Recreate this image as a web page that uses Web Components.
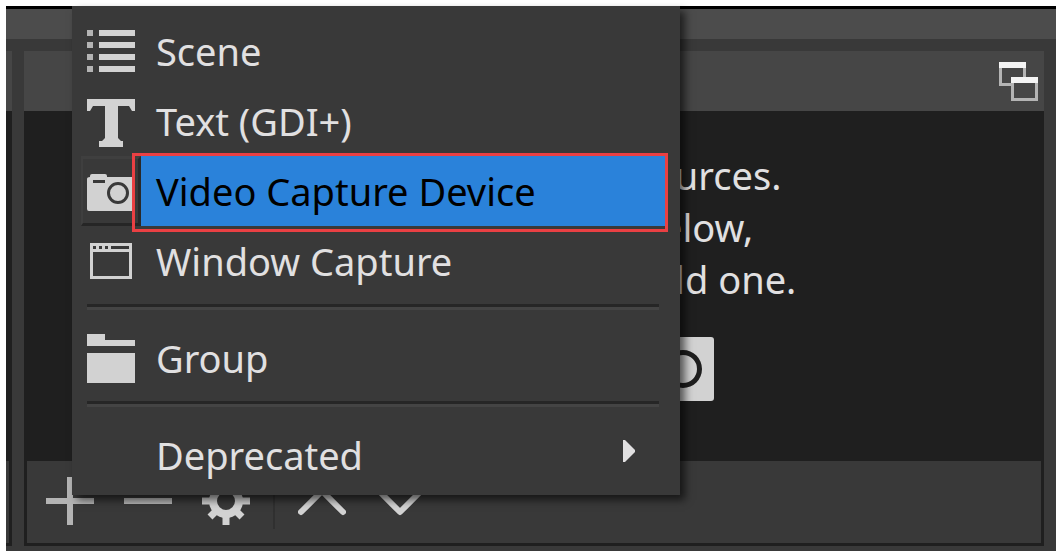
<!DOCTYPE html>
<html lang="en">
<head>
<meta charset="UTF-8">
<meta name="viewport" content="width=device-width, initial-scale=1.0">
<title>Sources</title>
<style>
    * {
        box-sizing: border-box;
    }

    body {
        margin: 0;
        padding: 6px 8px 9px 6px;
        min-height: 100vh;
        display: flex;
        background: #ffffff;
        color: #e1e0e1;
        font-family: "Noto Sans", "Open Sans", sans-serif;
        font-size: 38px;
        line-height: 52px;
    }
</style>
</head>
<body>
<app-window></app-window>

<script>
const ICONS = {
    scene: `<svg width="48" height="42" viewBox="0 0 16 14" shape-rendering="crispEdges">
        <path fill="#b4b4b4" d="M0 0h2v2H0zM0 4h2v2H0zM0 8h2v2H0zM0 12h2v2H0z"/>
        <path d="M4 0h12v2H4zM4 4h12v2H4zM4 8h12v2H4zM4 12h12v2H4z"/></svg>`,
    text: `<svg width="48" height="52" viewBox="0 -4 48 52">
        <path d="M0 0H48V12H45L42 7H31V39L34 42H36V48H12V42H15L18 39V7H6L3 12H0Z"/></svg>`,
    camera: `<svg width="48" height="39" viewBox="0 -2 48 39">
        <path fill-rule="evenodd" d="M3 3V2Q3 0 5 0H18Q20 0 20 2V3H46Q48 3 48 5V35Q48 37 46 37H2Q0 37 0 35V5Q0 3 3 3ZM6 6V9H18V6ZM31 8A11 11 0 1 0 31 30A11 11 0 1 0 31 8ZM31 11A8 8 0 1 1 31 27A8 8 0 1 1 31 11Z"/></svg>`,
    window: `<svg width="42" height="36" viewBox="0 0 14 12" shape-rendering="crispEdges">
        <path fill-rule="evenodd" d="M0 0H14V12H0ZM1 1V2H2V1ZM3 1V2H4V1ZM5 1V2H6V1ZM7 1V2H13V1ZM1 3V11H13V3Z"/></svg>`,
    group: `<svg width="48" height="49" viewBox="0 0 48 49" shape-rendering="crispEdges">
        <path d="M0 0H18V6H48V12H0ZM0 19H48V49H0Z"/></svg>`,
    arrow: `<svg width="12" height="30" viewBox="0 0 12 30">
        <path d="M0 0H2L12 10V12L2 22H0Z"/></svg>`,
    plus: `<svg width="48" height="48" viewBox="0 0 48 48" shape-rendering="crispEdges">
        <path d="M21 0H27V21H48V27H27V48H21V27H0V21H21Z"/></svg>`,
    minus: `<svg width="48" height="48" viewBox="0 0 48 48" shape-rendering="crispEdges">
        <path d="M0 21H48V27H0Z"/></svg>`,
    gear: `<svg width="48" height="48" viewBox="0 0 48 48">
        <path fill="none" stroke="currentColor" stroke-width="8" d="M24 11A13 13 0 1 1 24 37A13 13 0 1 1 24 11Z"/>
        <path fill="none" stroke="currentColor" stroke-width="7" d="M24 0V10M24 38V48M0 24H10M38 24H48M8 8L14 14M34 34L40 40M8 40L14 34M34 14L40 8"/></svg>`,
    up: `<svg width="48" height="48" viewBox="0 0 48 48">
        <path fill="none" stroke="currentColor" stroke-width="6" stroke-linecap="round" d="M3 35L24 14L45 35"/></svg>`,
    down: `<svg width="48" height="48" viewBox="0 0 48 48">
        <path fill="none" stroke="currentColor" stroke-width="6" stroke-linecap="round" stroke-linejoin="round" d="M3 14L24 35L45 14"/></svg>`,
    popout: `<svg width="39" height="39" viewBox="0 0 13 13" shape-rendering="crispEdges">
        <path fill="#b4b4b4" d="M0 0H9V5H13V13H4V8H0ZM1 2V7H4V5H8V2ZM5 7V12H12V7Z" fill-rule="evenodd"/>
        <path fill="#f4f4f4" d="M0 0H9V2H0ZM4 5H13V7H4Z"/></svg>`,
    image: `<svg width="74" height="64" viewBox="0 0 74 64">
        <path fill-rule="evenodd" d="M0 0H74V64H0ZM6 6V58H68V6ZM12 52L28 26L40 42L50 32L62 52Z"/></svg>`,
    monitor: `<svg width="74" height="64" viewBox="0 0 74 64">
        <path fill-rule="evenodd" d="M0 0H74V50H44V58H54V64H20V58H30V50H0ZM6 6V44H68V6Z"/></svg>`,
    globe: `<svg width="74" height="64" viewBox="0 0 74 64">
        <path fill="none" stroke="currentColor" stroke-width="4" d="M37 2A30 30 0 1 1 37 62A30 30 0 1 1 37 2ZM37 2Q10 32 37 62Q64 32 37 2ZM7 32H67"/></svg>`,
    bigcamera: `<svg width="84" height="70" viewBox="0 0 84 70">
        <path fill-rule="evenodd" d="M5 6V3Q5 0 8 0H32Q35 0 35 3V6H81Q84 6 84 9V67Q84 70 81 70H3Q0 70 0 67V9Q0 6 5 6ZM10 12V17H32V12ZM53 19A19 19 0 1 0 53 57A19 19 0 1 0 53 19ZM53 24A14 14 0 1 1 53 52A14 14 0 1 1 53 24Z"/></svg>`
};

class ObsIcon extends HTMLElement {
    constructor(){
        super();
        this.attachShadow({mode: 'open'})
    }

    connectedCallback(){
        this.shadowRoot.innerHTML = `
        <style>
            :host {
                display: block;
            }

            svg {
                display: block;
                fill: currentColor;
            }
        </style>
        ${ICONS[this.getAttribute('name')]}
    `;
        this.shadowRoot.querySelector('svg').setAttribute('aria-hidden', 'true');
    }
}

class MenuEntry extends HTMLElement {
    constructor(){
        super();
        this.attachShadow({mode: 'open'})
    }

    connectedCallback(){
        const icon = this.getAttribute('icon');
        this.shadowRoot.innerHTML = `
        <style>
            * {
                box-sizing: border-box;
            }

            :host {
                display: block;
                position: relative;
            }

            button {
                display: flex;
                width: 100%;
                height: 70px;
                padding: 0 15px 0 9px;
                border: 0;
                background: none;
                color: inherit;
                font: inherit;
                text-align: left;
            }

            .icon {
                width: 60px;
                display: flex;
                align-items: center;
                justify-content: center;
                color: #d2d2d2;
            }

            .label {
                flex: 1;
                display: flex;
                align-items: center;
                justify-content: space-between;
                padding: 0 30px 0 15px;
            }

            :host([selected]) .icon {
                border: solid #3f3f3f;
                border-width: 3px 3px 3px 2px;
                border-right-color: #292929;
                border-bottom-color: #262626;
            }

            :host([selected]) .label {
                background: #2a82da;
                color: #000000;
            }

            /* red marker around the highlighted entry */
            :host([selected])::after {
                content: '';
                position: absolute;
                top: -3px;
                right: 12px;
                bottom: -6px;
                left: 60px;
                border: 3px solid #ea4043;
                pointer-events: none;
            }
        </style>
        <button type="button" role="menuitem">
            <span class="icon">${icon ? `<obs-icon name="${icon}"></obs-icon>` : ''}</span>
            <span class="label">
                <slot></slot>
                ${this.hasAttribute('submenu') ? '<obs-icon name="arrow"></obs-icon>' : ''}
            </span>
        </button>
    `;
    }
}

class SourceMenu extends HTMLElement {
    constructor(){
        super();
        this.attachShadow({mode: 'open'})
    }

    connectedCallback(){
        this.shadowRoot.innerHTML = `
        <style>
            :host {
                display: block;
                box-sizing: border-box;
                padding: 10px 0 5px;
                background: #393939;
                box-shadow: 5px 5px 8px rgba(0, 0, 0, 0.6);
            }

            hr {
                height: 3px;
                margin: 8px 21px 13px 15px;
                border: 0;
                border-bottom: 3px solid #444444;
                background: #262626;
            }
        </style>
        <div role="menu">
            <menu-entry icon="scene">Scene</menu-entry>
            <menu-entry icon="text">Text (GDI+)</menu-entry>
            <menu-entry icon="camera" selected>Video Capture Device</menu-entry>
            <menu-entry icon="window">Window Capture</menu-entry>
            <hr>
            <menu-entry icon="group">Group</menu-entry>
            <hr>
            <menu-entry submenu>Deprecated</menu-entry>
        </div>
    `;
    }
}

class DockToolbar extends HTMLElement {
    constructor(){
        super();
        this.attachShadow({mode: 'open'})
    }

    connectedCallback(){
        this.shadowRoot.innerHTML = `
        <style>
            :host {
                display: flex;
                height: 82px;
                padding-left: 4px;
                background: #393939;
                color: #d2d2d2;
            }

            button {
                display: flex;
                align-items: center;
                justify-content: center;
                width: 78px;
                height: 80px;
                padding: 0;
                border: 0;
                background: none;
                color: inherit;
            }

            .dim {
                color: #b4b4b4;
            }

            .divider {
                width: 2px;
                height: 54px;
                margin: 14px 8px;
                background: #303030;
            }
        </style>
        <button type="button" class="dim" aria-label="Add"><obs-icon name="plus"></obs-icon></button>
        <button type="button" class="dim" aria-label="Remove"><obs-icon name="minus"></obs-icon></button>
        <button type="button" aria-label="Properties"><obs-icon name="gear"></obs-icon></button>
        <span class="divider"></span>
        <button type="button" aria-label="Move up"><obs-icon name="up"></obs-icon></button>
        <button type="button" aria-label="Move down"><obs-icon name="down"></obs-icon></button>
    `;
    }
}

class SourcesDock extends HTMLElement {
    constructor(){
        super();
        this.attachShadow({mode: 'open'})
    }

    connectedCallback(){
        this.shadowRoot.innerHTML = `
        <style>
            :host {
                display: flex;
                flex-direction: column;
            }

            header {
                display: flex;
                align-items: center;
                justify-content: flex-end;
                height: 60px;
                padding-right: 6px;
                background: #464646;
            }

            header button {
                padding: 0;
                border: 0;
                background: none;
            }

            .body {
                flex: 1;
                display: flex;
                flex-direction: column;
                border: solid #1f1f1f;
                border-width: 0 3px 3px;
                background: #1f1f1f;
            }

            .empty {
                flex: 1;
                display: flex;
                flex-direction: column;
                align-items: center;
                justify-content: center;
                gap: 26px;
                padding-bottom: 22px;
                text-align: center;
            }

            p {
                margin: 0;
            }

            .types {
                display: flex;
                align-items: flex-end;
                gap: 18px;
                color: #d2d2d2;
            }
        </style>
        <header>
            <button type="button" aria-label="Undock"><obs-icon name="popout"></obs-icon></button>
        </header>
        <div class="body">
            <div class="empty">
                <p>You don't have any sources.<br>Click the + button below,<br>or right click here to add one.</p>
                <div class="types">
                    <obs-icon name="image"></obs-icon>
                    <obs-icon name="monitor"></obs-icon>
                    <obs-icon name="globe"></obs-icon>
                    <obs-icon name="bigcamera"></obs-icon>
                </div>
            </div>
            <dock-toolbar></dock-toolbar>
        </div>
    `;
    }
}

class AppWindow extends HTMLElement {
    constructor(){
        super();
        this.attachShadow({mode: 'open'})
    }

    connectedCallback(){
        this.shadowRoot.innerHTML = `
        <style>
            * {
                box-sizing: border-box;
            }

            :host {
                flex: 1;
                display: flex;
                flex-direction: column;
                position: relative;
                background: #393939;
            }

            .strip {
                height: 33px;
                border-top: 3px solid #000000;
                background: #4c4c4c;
            }

            .docks {
                flex: 1;
                display: flex;
                gap: 12px;
                padding: 12px 12px 5px 0;
            }

            /* right edge of the neighbouring dock */
            .neighbour {
                width: 6px;
                display: flex;
                flex-direction: column;
            }

            .neighbour .title {
                height: 60px;
                background: #464646;
            }

            .neighbour .list {
                flex: 1;
                background: #1f1f1f;
            }

            .neighbour .tools {
                height: 85px;
                border: solid #1f1f1f;
                border-width: 0 3px 3px 0;
            }

            sources-dock {
                flex: 1;
            }

            source-menu {
                position: absolute;
                top: 0;
                left: 66px;
                width: 608px;
            }
        </style>
        <div class="strip"></div>
        <div class="docks">
            <div class="neighbour">
                <div class="title"></div>
                <div class="list"></div>
                <div class="tools"></div>
            </div>
            <sources-dock></sources-dock>
        </div>
        <source-menu></source-menu>
    `;
    }
}

customElements.define('obs-icon', ObsIcon);
customElements.define('menu-entry', MenuEntry);
customElements.define('source-menu', SourceMenu);
customElements.define('dock-toolbar', DockToolbar);
customElements.define('sources-dock', SourcesDock);
customElements.define('app-window', AppWindow);
</script>
</body>
</html>
